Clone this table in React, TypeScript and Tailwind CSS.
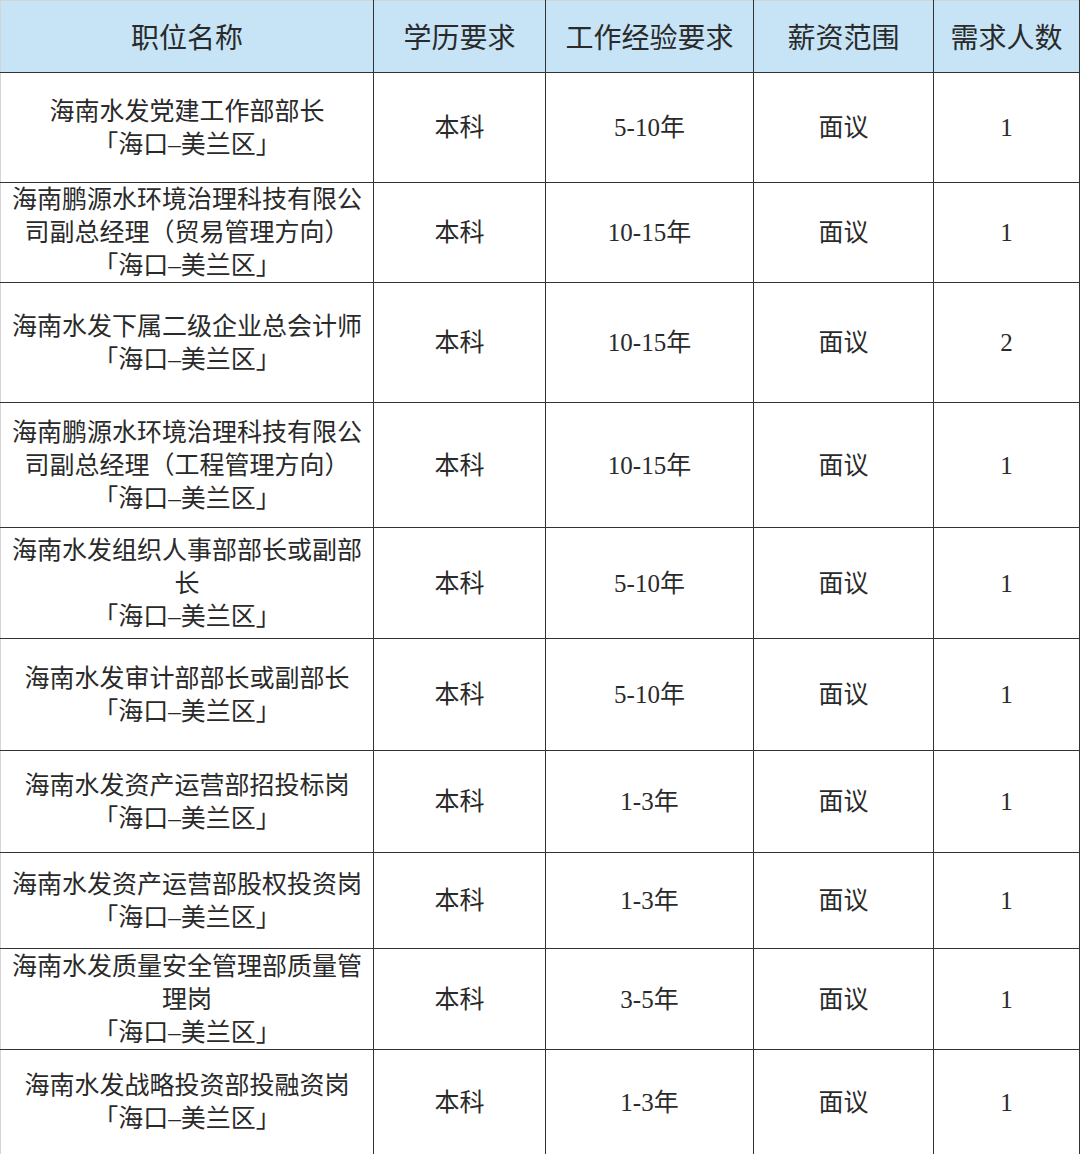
import React from 'react';

type Job = {
  title: string[];
  degree: string;
  years: string;
  salary: string;
  count: string;
  height: string;
};

const headers = ['职位名称', '学历要求', '工作经验要求', '薪资范围', '需求人数'];

const jobs: Job[] = [
  { title: ['海南水发党建工作部部长'], degree: '本科', years: '5-10年', salary: '面议', count: '1', height: 'h-[110px]' },
  { title: ['海南鹏源水环境治理科技有限公司副总经理（贸易管理方向）'], degree: '本科', years: '10-15年', salary: '面议', count: '1', height: 'h-[100px]' },
  { title: ['海南水发下属二级企业总会计师'], degree: '本科', years: '10-15年', salary: '面议', count: '2', height: 'h-[120px]' },
  { title: ['海南鹏源水环境治理科技有限公司副总经理（工程管理方向）'], degree: '本科', years: '10-15年', salary: '面议', count: '1', height: 'h-[125px]' },
  { title: ['海南水发组织人事部部长或副部长'], degree: '本科', years: '5-10年', salary: '面议', count: '1', height: 'h-[111px]' },
  { title: ['海南水发审计部部长或副部长'], degree: '本科', years: '5-10年', salary: '面议', count: '1', height: 'h-[112px]' },
  { title: ['海南水发资产运营部招投标岗'], degree: '本科', years: '1-3年', salary: '面议', count: '1', height: 'h-[102px]' },
  { title: ['海南水发资产运营部股权投资岗'], degree: '本科', years: '1-3年', salary: '面议', count: '1', height: 'h-[96px]' },
  { title: ['海南水发质量安全管理部质量管理岗'], degree: '本科', years: '3-5年', salary: '面议', count: '1', height: 'h-[101px]' },
  { title: ['海南水发战略投资部投融资岗'], degree: '本科', years: '1-3年', salary: '面议', count: '1', height: 'h-[105px]' },
];

const cell = 'border border-[#333333] text-center align-middle';

export default function App() {
  return (
    <div className="w-[1080px] bg-white font-['Liberation_Serif','Noto_Sans_CJK_SC',serif] text-[#2a2a2a]">
      <table className="w-[1079px] table-fixed border-collapse">
        <colgroup>
          <col className="w-[373px]" />
          <col className="w-[172px]" />
          <col className="w-[208px]" />
          <col className="w-[180px]" />
          <col className="w-[146px]" />
        </colgroup>
        <thead>
          <tr className="h-[72px] bg-[#c6e4f6]">
            {headers.map((h, i) => (
              <th
                key={h}
                className={`${cell} border-t-[#d4d4d4] pt-1 text-[28px] font-normal leading-[36px] ${i === 0 ? 'border-l-[#d4d4d4]' : ''}`}
              >
                {h}
              </th>
            ))}
          </tr>
        </thead>
        <tbody className="text-[25px] leading-[33px]">
          {jobs.map((job, idx) => (
            <tr key={idx} className={job.height}>
              <td className={`${cell} border-l-[#d4d4d4] px-2`}>
                {job.title.map((t) => (
                  <div key={t}>{t}</div>
                ))}
                <div>「海口–美兰区」</div>
              </td>
              <td className={cell}>{job.degree}</td>
              <td className={cell}>{job.years}</td>
              <td className={cell}>{job.salary}</td>
              <td className={cell}>{job.count}</td>
            </tr>
          ))}
        </tbody>
      </table>
    </div>
  );
}
